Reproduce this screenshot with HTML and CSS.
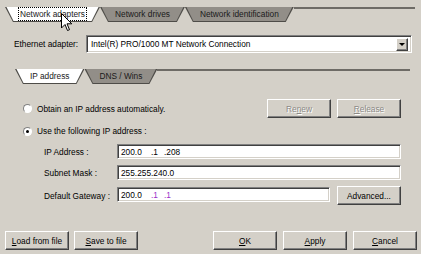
FILE: index.html
```html
<!DOCTYPE html>
<html lang="en">
<head>
    <meta charset="UTF-8">
    <title>Network Settings</title>
    <link rel="stylesheet" href="styles.css">
</head>
<body>
    <div class="dialog">
        <div class="tabstrip main">
            <div class="tab active"><span class="focus">Network adapters</span></div>
            <div class="tab">Network drives</div>
            <div class="tab">Network identification</div>
            <div class="strip-rest"></div>
        </div>

        <div class="adapter-row">
            <label class="adapter-label">Ethernet adapter:</label>
            <div class="combo">
                <span class="combo-text">Intel(R) PRO/1000 MT Network Connection</span>
                <span class="combo-btn"><span class="arrow"></span></span>
            </div>
        </div>

        <div class="tabstrip inner">
            <div class="tab active">IP address</div>
            <div class="tab">DNS / Wins</div>
            <div class="strip-rest"></div>
        </div>

        <div class="ip-panel">
            <div class="radio-row first">
                <span class="radio"></span>
                <span class="radio-label">Obtain an IP address automaticaly.</span>
                <div class="row-buttons">
                    <button class="btn disabled">Re<u>n</u>ew</button>
                    <button class="btn disabled"><u>R</u>elease</button>
                </div>
            </div>
            <div class="radio-row">
                <span class="radio checked"></span>
                <span class="radio-label">Use the following IP address :</span>
            </div>
            <div class="fields">
                <div class="field-label">IP Address :</div>
                <div class="field"><span class="seg s1">200.0</span><span class="seg s2">.1</span><span class="seg">.208</span></div>
                <div class="field-label">Subnet Mask :</div>
                <div class="field"><span class="seg">255.255.240.0</span></div>
                <div class="field-label">Default Gateway :</div>
                <div class="gateway-cell">
                    <div class="field"><span class="seg s1">200.0</span><span class="seg s2 octet">.1</span><span class="seg octet">.1</span></div>
                    <button class="btn">Advanced...</button>
                </div>
            </div>
        </div>

        <div class="footer">
            <div class="footer-left">
                <button class="btn"><u>L</u>oad from file</button>
                <button class="btn"><u>S</u>ave to file</button>
            </div>
            <div class="footer-right">
                <button class="btn"><u>O</u>K</button>
                <button class="btn"><u>A</u>pply</button>
                <button class="btn"><u>C</u>ancel</button>
            </div>
        </div>

        <svg class="cursor" width="12" height="19" viewBox="0 0 12 19">
            <path d="M0.5 0.5 L0.5 15 L4 11.5 L6.5 17.5 L8.5 16.7 L6 10.8 L10.8 10.8 Z" fill="#fff" stroke="#000" stroke-width="1"/>
        </svg>
    </div>
</body>
</html>
```

FILE: styles.css
```css
/* Reset and Base Styles */
* {
    margin: 0;
    padding: 0;
    box-sizing: border-box;
}
body {
    width: 421px;
    height: 254px;
    overflow: hidden;
    background: #d4d0c8;
    color: #000;
    font-family: "Liberation Sans", Arial, sans-serif;
    font-size: 8.3px;
}
.dialog {
    position: relative;
    padding-top: 7px;
}
/* Tabs */
.tabstrip {
    display: flex;
    height: 15px;
}
.tabstrip.main {
    margin: 0 6px 0 5px;
}
.tabstrip.inner {
    margin: 16px 11px 0 15px;
}
.tab {
    position: relative;
    isolation: isolate;
    display: flex;
    align-items: center;
    height: 15px;
    padding: 0 15px 1px;
    color: #1a1a1a;
    white-space: nowrap;
}
.tab::before,
.tab::after {
    content: "";
    position: absolute;
    top: 0;
    left: 0;
    right: 0;
    bottom: 0;
    z-index: -1;
}
.tab::before {
    background: #4e4c48;
    clip-path: polygon(0 0, 100% 0, calc(100% - 8px) 100%, 8px 100%);
}
.tab::after {
    background: #928e88;
    clip-path: polygon(1.5px 0, calc(100% - 1.5px) 0, calc(100% - 8.5px) calc(100% - 1px), 8.5px calc(100% - 1px));
}
.tab.active::after {
    background: #fff;
}
.focus {
    outline: 1px dotted #000;
    outline-offset: 1px;
}
.strip-rest {
    flex: 1;
    border-top: 2px solid #6e6b66;
}
/* Adapter */
.adapter-row {
    display: flex;
    align-items: center;
    margin-top: 13px;
    padding-left: 14px;
}
.adapter-label {
    width: 72px;
}
.combo {
    display: flex;
    align-items: center;
    width: 326px;
    height: 18px;
    background: #fff;
    border: 1px solid;
    border-color: #808080 #fff #fff #808080;
    box-shadow: inset 1px 1px #404040, inset -1px -1px #d4d0c8;
}
.combo-text {
    flex: 1;
    padding-left: 4px;
}
.combo-btn {
    display: flex;
    align-items: center;
    justify-content: center;
    width: 12px;
    height: 13px;
    margin-right: 3px;
    background: #d4d0c8;
    border: 1px solid;
    border-color: #fff #404040 #404040 #fff;
    box-shadow: inset -1px -1px #808080;
}
.arrow {
    width: 0;
    height: 0;
    border-left: 3px solid transparent;
    border-right: 3px solid transparent;
    border-top: 3px solid #000;
}
/* IP panel */
.radio-row {
    display: flex;
    align-items: center;
    height: 14px;
    margin-top: 6px;
    padding: 0 20px 0 23px;
}
.radio-row.first {
    height: 19px;
    margin-top: 15px;
}
.radio {
    width: 9px;
    height: 9px;
    margin-right: 5px;
    border-radius: 50%;
    background: #fff;
    border: 1px solid;
    border-color: #808080 #fff #fff #808080;
    position: relative;
}
.radio.checked::after {
    content: "";
    position: absolute;
    left: 2px;
    top: 2px;
    width: 3px;
    height: 3px;
    border-radius: 50%;
    background: #000;
}
.row-buttons {
    display: flex;
    gap: 6px;
    margin-left: auto;
}
.fields {
    display: grid;
    grid-template-columns: 73px 1fr;
    grid-template-rows: 15px 15px 19px;
    row-gap: 6px;
    margin-top: 6px;
    padding: 0 20px 0 44px;
    align-items: center;
}
.field {
    display: flex;
    align-items: center;
    height: 15px;
    padding-left: 3px;
    background: #fff;
    border: 1px solid;
    border-color: #808080 #fff #fff #808080;
    box-shadow: inset 1px 1px #404040, inset -1px -1px #d4d0c8;
}
.seg.s1 {
    width: 30px;
}
.seg.s2 {
    width: 13px;
}
.octet {
    color: #9a30c8;
}
.gateway-cell {
    display: flex;
    align-items: flex-start;
    gap: 7px;
}
.gateway-cell .field {
    flex: 1;
    margin-top: 1px;
}
/* Buttons */
.btn {
    width: 64px;
    height: 19px;
    background: #d4d0c8;
    color: #000;
    font: inherit;
    border: 1px solid;
    border-color: #fff #404040 #404040 #fff;
    box-shadow: inset -1px -1px #808080;
}
.btn.disabled {
    color: #8c8a86;
    text-shadow: 1px 1px #fff;
}
.footer {
    display: flex;
    justify-content: space-between;
    margin-top: 26px;
    padding: 0 4px 0 5px;
}
.footer-left {
    display: flex;
    gap: 5px;
}
.footer-right {
    display: flex;
    gap: 6px;
}
/* Mouse pointer overlay */
.cursor {
    position: absolute;
    left: 61px;
    top: 13px;
}
```
